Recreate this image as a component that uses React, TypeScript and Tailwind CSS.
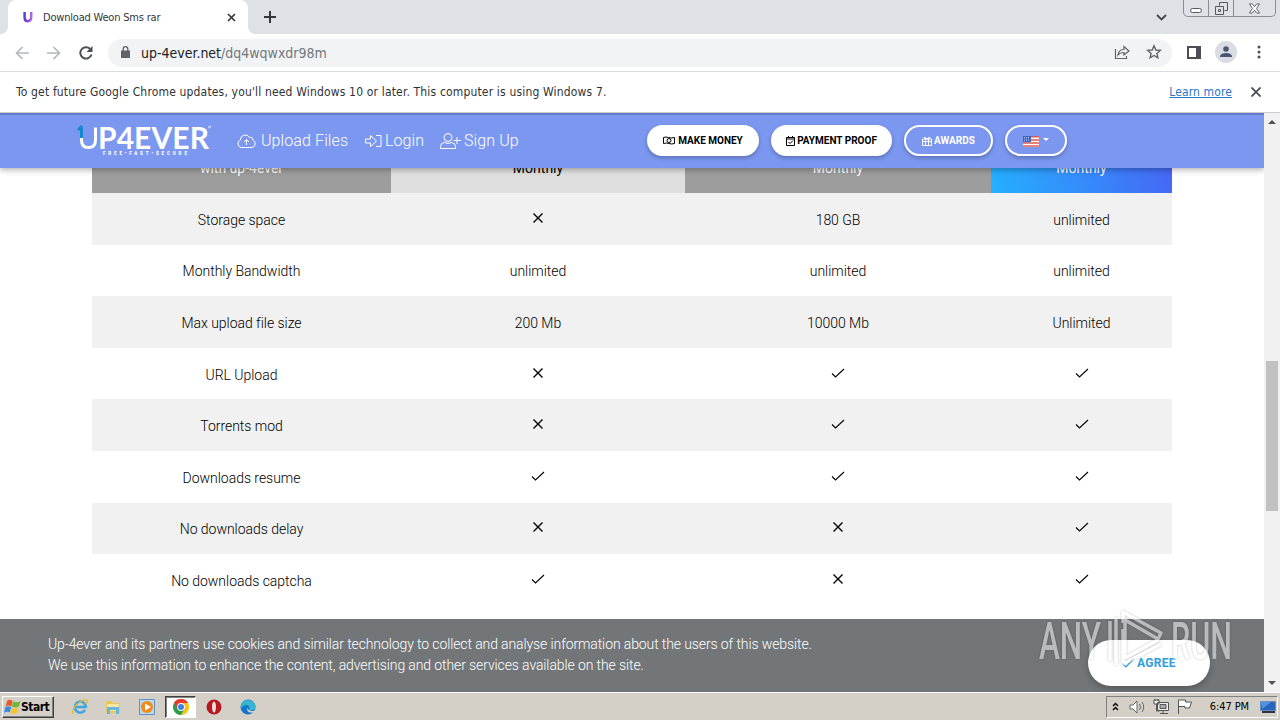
import { ReactNode } from 'react'

// Helper function for conditional classes
function classNames(...classes: (string | false)[]) {
  return classes.filter(Boolean).join(' ')
}

// true draws a check, false draws a cross
type Cell = string | boolean

const rows: { name: string; cells: Cell[] }[] = [
  { name: 'Storage space', cells: [false, '180 GB', 'unlimited'] },
  { name: 'Monthly Bandwidth', cells: ['unlimited', 'unlimited', 'unlimited'] },
  { name: 'Max upload file size', cells: ['200 Mb', '10000 Mb', 'Unlimited'] },
  { name: 'URL Upload', cells: [false, true, true] },
  { name: 'Torrents mod', cells: [false, true, true] },
  { name: 'Downloads resume', cells: [true, true, true] },
  { name: 'No downloads delay', cells: [false, false, true] },
  { name: 'No downloads captcha', cells: [true, false, true] },
]

const head = [
  { name: 'with up-4ever', style: 'bg-[#9d9d9d] text-white' },
  { name: 'Monthly', style: 'bg-[#dfdfdf] text-black' },
  { name: 'Monthly', style: 'bg-[#9d9d9d] text-white' },
  { name: 'Monthly', style: 'bg-linear-[80deg] from-[#24b0ff] to-[#4667f5] text-white' },
]

function Icon({ size = 'size-4', box = '0 0 16 16', width = 1, className = '', children }: {
  size?: string
  box?: string
  width?: number
  className?: string
  children: ReactNode
}) {
  return (
    <svg
      viewBox={box}
      fill="none"
      stroke="currentColor"
      strokeWidth={width}
      className={classNames('shrink-0', size, className)}
      aria-hidden="true"
    >
      {children}
    </svg>
  )
}

function Mark({ on }: { on: boolean }) {
  return (
    <Icon size="size-[14px]" box="0 0 14 14" width={on ? 1.1 : 1.4} className="-mt-[5px] text-black">
      {on ? <path d="M1 7.5 4.5 11 13 3" /> : <path d="m2.500 2.500 9 9M11.500 2.500l-9 9" />}
    </Icon>
  )
}

function TabStrip() {
  return (
    <div className="flex h-[34px] shrink-0 bg-[#dee1e6]">
      <div className="relative ml-2 flex w-60 items-center rounded-t-lg bg-white text-[#35363a]">
        {/* Curved feet of the active tab */}
        <span className="absolute bottom-0 -left-2 size-2 bg-[radial-gradient(circle_at_0_0,#dee1e6_8px,#fff_8px)]" />
        <span className="absolute -right-2 bottom-0 size-2 bg-[radial-gradient(circle_at_100%_0,#dee1e6_8px,#fff_8px)]" />
        <svg viewBox="0 0 10 12" className="ml-[15px] h-3 w-[10px]" fill="none">
          <defs>
            <linearGradient id="fav" x1="0" x2="1">
              <stop stopColor="#5a3fd0" />
              <stop offset="1" stopColor="#b565d8" />
            </linearGradient>
          </defs>
          <path d="M1.6 1v5.2q0 4 3.2 4t3.4-4V1" stroke="url(#fav)" strokeWidth="2.5" />
        </svg>
        <span className="mt-[2px] ml-[10px] w-[180px] text-[11px] tracking-[-0.2px] whitespace-nowrap">Download Weon Sms rar</span>
        <Icon size="size-[9px]" box="0 0 9 9" width={1.7} className="ml-[4px]"><path d="m1 1 7 7M8 1 1 8" /></Icon>
      </div>
      <Icon size="size-3" box="0 0 12 12" width={2} className="mt-[11px] ml-4 text-[#35363a]"><path d="M6 0v12M0 6h12" /></Icon>
      <Icon size="h-[7px] w-[11px]" box="0 0 11 7" width={1.8} className="mt-[14px] ml-auto text-[#45474b]"><path d="m1 1 4.500 4.500L10 1" /></Icon>
      {/* Window buttons */}
      <div className="mr-1 ml-4 flex h-[17px] w-[93px] rounded-b-[5px] border border-t-0 border-[#898d94] text-[#55585f]">
        <div className="flex w-[25px] justify-center border-r border-[#898d94]">
          <span className="mt-2 h-[5px] w-3 rounded-sm border border-[#55585f] bg-white" />
        </div>
        <div className="flex w-[25px] justify-center border-r border-[#898d94]">
          <Icon size="size-[13px]" box="0 0 13 13" className="mt-[2px]">
            <path d="M4.5 3.5v-3h8v8h-3M.5 4.5h8v8h-8zM3.5 7.5h2v2h-2z" />
          </Icon>
        </div>
        <div className="flex flex-1 justify-center">
          <Icon size="h-[11px] w-[13px]" box="0 0 13 12" className="mt-[3px]">
            <path d="M1 1h3l2.500 3L9 1h3L8.700 6 12 11H9L6.500 8 4 11H1l3.300-5z" fill="#fff" />
          </Icon>
        </div>
      </div>
    </div>
  )
}

function Toolbar() {
  return (
    <div className="flex h-[38px] shrink-0 items-center border-b border-[#dadce0] bg-white pl-[15px] text-[#5f6368]">
      <Icon size="size-[14px]" box="0 0 14 14" width={1.7} className="text-[#b5b7ba]"><path d="M14 7H1.500M7.500 1l-6 6 6 6" /></Icon>
      <Icon size="size-[14px]" box="0 0 14 14" width={1.7} className="ml-[18px] text-[#b5b7ba]"><path d="M0 7h12.500M6.500 1l6 6-6 6" /></Icon>
      <Icon size="size-[14px]" box="0 0 14 14" width={2} className="ml-[18px] text-[#4d5054]">
        <path d="M11.200 3A5.700 5.700 0 1 0 12.500 8.500" />
        <path d="M13.500 0v6h-6z" fill="currentColor" stroke="none" />
      </Icon>
      <div className="ml-[15px] flex h-7 w-[1064px] items-center rounded-full bg-[#f1f3f4] pl-[13px]">
        <svg viewBox="0 0 9 12" className="-mt-px h-3 w-[9px]" fill="#5f6368">
          <path d="M0 4.500h9V12H0z" />
          <path d="M2.200 5V3a2.300 2.300 0 0 1 4.600 0v2" fill="none" stroke="#5f6368" strokeWidth="1.300" />
        </svg>
        <span className="mt-px ml-[11px] text-[14px] text-[#202124]">
          up-4ever.net<span className="text-[#73777c]">/dq4wqwxdr98m</span>
        </span>
        <Icon size="size-4" className="-mt-[2px] mr-4 ml-auto" width={1.2}>
          <path d="M1.500 5v9.500h11V12M4 11c.5-4 3-5.500 6-5.500V2.500L15 7l-5 4V8.500C7.500 8.500 5.500 9 4 11z" />
        </Icon>
        <Icon size="size-4" className="-mt-px mr-[10px]" width={1.4}>
          <path d="m8 1.800 1.800 4.200 4.500.4-3.400 3 1 4.400L8 11.500l-3.900 2.300 1-4.400-3.400-3L6.200 6z" />
        </Icon>
      </div>
      <svg viewBox="0 0 14 13" className="-mt-px ml-[15px] h-[13px] w-[14px]"><path d="M1 1h12v11H1z" fill="none" stroke="#4b4e52" strokeWidth="2" /><path d="M9 1h4v11H9z" fill="#4b4e52" /></svg>
      <div className="-mt-px ml-[14px] flex size-[22px] items-center justify-center rounded-full bg-[#d9dde3]">
        <svg viewBox="0 0 12 12" className="size-3" fill="#4a5672"><circle cx="6" cy="3" r="2.800" /><path d="M0 11V10q1-3 6-3t6 3v1z" /></svg>
      </div>
      <svg viewBox="0 0 4 14" className="-mt-px ml-5 h-[14px] w-1" fill="#4b4e52"><circle cx="2" cy="2" r="1.500" /><circle cx="2" cy="7" r="1.500" /><circle cx="2" cy="12" r="1.500" /></svg>
    </div>
  )
}

function Logo() {
  return (
    <svg viewBox="0 0 134 32" className="-mt-px h-8 w-[134px] shrink-0" fill="#fff">
      <path d="M4.500 11v5q0 7.500 7 7.500T18.500 16V3.500" fill="none" stroke="#fff" strokeWidth="3" />
      <path d="M4.500 2.500V14M1 6l4-4" fill="none" stroke="#1688d0" strokeWidth="3" />
      <text x="21" y="25" textLength="111" lengthAdjust="spacingAndGlyphs" fontFamily="Lato" fontSize="31" fontWeight="700">P4EVER</text>
      <text x="26" y="31.300" textLength="84" fontFamily="Roboto" fontSize="4.500" fontWeight="900">FREE•FAST•SECURE</text>
      <circle cx="132.500" cy="3" r="1" fill="none" stroke="#fff" strokeWidth=".6" />
    </svg>
  )
}

function Navbar() {
  return (
    <nav className="z-10 flex h-[55px] shrink-0 items-center border-t-2 border-[#667bc5] bg-[#7b97f0] pb-[2px] pl-[77px] text-[16px] font-light tracking-[0.1px] whitespace-nowrap text-white shadow-[0_2px_6px_rgba(0,0,0,0.3)]">
      <Logo />
      <div className="ml-[25px] flex w-[129px] items-center">
        <svg viewBox="0 0 20 14" className="mr-1 h-[14px] w-[21px]" fill="none" stroke="currentColor">
          <path d="M4.500 13.500h11a4 4 0 0 0 1-7.500A3 3 0 0 0 13 3.300 5 5 0 0 0 3.800 6 4 4 0 0 0 4.500 13.500zM10 11V5.500M7.500 8 10 5.500 12.500 8" />
        </svg>
        Upload Files
      </div>
      <div className="flex w-[75px] items-center">
        <svg viewBox="0 0 17 14" className="mr-[3px] h-[14px] w-[17px]" fill="none" stroke="currentColor">
          <path d="M.5 5h5V1.500l6 5.500-6 5.500V9h-5zM11 1.500h5v11h-5" />
        </svg>
        Login
      </div>
      <div className="flex w-[207px] items-center">
        <svg viewBox="0 0 21 16" className="mr-[3px] h-4 w-[21px]" fill="none" stroke="currentColor">
          <circle cx="8" cy="4.500" r="4" />
          <path d="M4.500 9.500q-4 .5-4 4v2h15v-2q0-3.500-4-4-3.500 2-7 0zM17 4v7M13.500 7.500H21" />
        </svg>
        Sign Up
      </div>
      <div className="flex gap-3 text-[10px] font-bold tracking-[0]">
        <a className="flex h-[31px] w-28 items-center justify-center rounded-full bg-white text-black shadow-[0_2px_4px_rgba(0,0,0,0.25)]">
          <svg viewBox="0 0 12 9" className="mr-[3px] h-[9px] w-3" fill="none" stroke="currentColor"><path d="M.5 1.500q2.500-1 5 0t6 0v6q-3 1-5.500 0t-5.500 0z" /><circle cx="6" cy="4.500" r="2" /></svg>
          MAKE MONEY
        </a>
        <a className="flex h-[31px] w-[121px] items-center justify-center rounded-full bg-white text-black shadow-[0_2px_4px_rgba(0,0,0,0.25)]">
          <svg viewBox="0 0 9 10" className="mr-[2px] h-[10px] w-[9px]" fill="none" stroke="currentColor"><path d="M.5 1.500h8v8h-8zM.5 3h8M2.500 0v2M6.500 0v2M2.500 6 4 7.500l3-3" /></svg>
          PAYMENT PROOF
        </a>
        <a className="flex h-[31px] w-[89px] items-center justify-center rounded-full border-2 border-white shadow-[0_2px_4px_rgba(0,0,0,0.25)]">
          <svg viewBox="0 0 10 10" className="mr-[2px] size-[10px]" fill="none" stroke="currentColor"><path d="M.5 3h9v6.500h-9zM0 5.500h10M3.500 3v6.500M6.500 3v6.500M5 3Q2 2.500 2 1.500T5 3q3-.5 3-1.500T5 3z" /></svg>
          AWARDS
        </a>
        <a className="flex h-[31px] w-[62px] items-center justify-center rounded-full border-2 border-white shadow-[0_2px_4px_rgba(0,0,0,0.25)]">
          <svg viewBox="0 0 16 11" className="mt-px h-[11px] w-4">
            <path d="M0 0h16v11H0z" fill="#fff" />
            <path d="M0 .8h16M0 3.900h16M0 7h16M0 10.100h16" stroke="#dd5a50" strokeWidth="1.500" />
            <path d="M0 0h8v6.200H0z" fill="#3f66c4" />
            <path d="M1 1.500h6M1 3h6M1 4.500h6" stroke="#c6d3f3" strokeWidth=".7" strokeDasharray="1 1" />
          </svg>
          <svg viewBox="0 0 6 3" className="-mt-[3px] ml-1 h-[3px] w-[6px]" fill="#fff"><path d="M0 0h6L3 3z" /></svg>
        </a>
      </div>
    </nav>
  )
}

function PlanTable() {
  return (
    <div className="ml-[92px] w-[1080px] text-[14px] text-black">
      <div className="grid h-[25px] grid-cols-[299px_294px_306px_181px] overflow-hidden text-center">
        {head.map((item, i) => (
          <div key={i} className={item.style}>
            <div className="-mt-[10px] leading-5">{item.name}</div>
          </div>
        ))}
      </div>
      {rows.map((row, i) => (
        <div
          key={row.name}
          className={classNames(
            'grid h-[51.6px] grid-cols-[299px_294px_306px_181px] place-items-center pt-[3px] font-[350] tracking-[-0.03px]',
            i % 2 === 0 && 'bg-[#f1f1f1]',
          )}
        >
          <div>{row.name}</div>
          {row.cells.map((cell, j) => (
            <div key={j}>{typeof cell === 'string' ? cell : <Mark on={cell} />}</div>
          ))}
        </div>
      ))}
    </div>
  )
}

function CookieBar() {
  return (
    <div className="mt-auto flex h-[73px] shrink-0 bg-[#727679] pt-[15px] pl-12 text-[14px] leading-[21px] font-light tracking-[-0.108px] text-white">
      <p className="w-[1040px]">
        Up-4ever and its partners use cookies and similar technology to collect and analyse information about the users of this website.
        <br />
        We use this information to enhance the content, advertising and other services available on the site.
      </p>
      <button className="mt-[6px] flex h-[46px] w-[122px] items-center justify-center rounded-full bg-white text-[12px] font-bold tracking-[0.3px] text-[#2f9fe0] shadow-[0_3px_6px_rgba(0,0,0,0.25)]">
        <Icon size="size-3" box="0 0 12 12" width={1.2} className="mr-[3px]"><path d="m.5 6.500 3.500 3.500 7.500-8" /></Icon>
        AGREE
      </button>
    </div>
  )
}

function Scrollbar() {
  return (
    <div className="flex w-4 shrink-0 flex-col items-center bg-[#f1f1f1] py-[7px]">
      <svg viewBox="0 0 8 4" className="h-1 w-2" fill="#505050"><path d="M0 4h8L4 0z" /></svg>
      <div className="mt-[237px] h-[150px] w-3 bg-[#c1c1c1]" />
      <svg viewBox="0 0 8 4" className="mt-auto h-1 w-2" fill="#505050"><path d="M0 0h8L4 4z" /></svg>
    </div>
  )
}

function Watermark() {
  return (
    <svg viewBox="0 0 196 64" className="absolute right-[47px] bottom-[47px] h-16 w-[196px] opacity-50 drop-shadow-[0_0_1px_rgba(0,0,0,0.5)]" fill="#fff">
      <text x="2" y="50" textLength="62" lengthAdjust="spacingAndGlyphs" fontFamily="Roboto" fontSize="51" fontWeight="500">ANY</text>
      <text x="134" y="50" textLength="61" lengthAdjust="spacingAndGlyphs" fontFamily="Roboto" fontSize="51" fontWeight="500">RUN</text>
      <path d="M73 12v40M79 8v48M86 20v35l38-20M86 14V3l38 21-3 6-33-19v38l33-18" fill="none" stroke="#fff" strokeWidth="3.500" strokeLinejoin="round" />
    </svg>
  )
}

function Taskbar() {
  return (
    <div className="flex h-7 shrink-0 items-center border-t border-white bg-[#d4d0c8] pl-[2px] text-black">
      <div className="flex h-[22px] w-[52px] items-center border border-t-white border-r-[#404040] border-b-[#404040] border-l-white pl-px shadow-[inset_-1px_-1px_#808080]">
        <svg viewBox="0 0 16 14" className="h-[15px] w-[17px]">
          <path d="M3 1.500q2-1.500 5 0L7 7Q4 5 1.500 7z" fill="#ee5a24" />
          <path d="M8.500 2q3 2 7 0l-1.500 5q-3 2-6.500 0z" fill="#70b83b" />
          <path d="M1.200 7.700q3-2 5.600-.2L5.500 12.500q-3-1.500-5.500.5z" fill="#3b8be0" />
          <path d="M7.300 7.900q3 2 6.500 0l-1.500 5q-3 2-6.300 0z" fill="#f8c32c" />
        </svg>
        <span className="text-[12px] font-bold tracking-[-0.5px]">Start</span>
      </div>
      {/* Quick launch */}
      <svg viewBox="0 0 18 18" className="ml-[17px] size-[18px]" fill="none">
        <path d="M14 12a5.500 5.500 0 1 1 .8-3H4" stroke="#3aa7e4" strokeWidth="2.500" />
        <path d="M2 16Q0 12 6 6.500T16 2q1 1-1 4" stroke="#e9b83b" strokeWidth="1.300" />
      </svg>
      <svg viewBox="0 0 16 16" className="ml-4 size-4">
        <path d="M1 2h6l1 2h7v10H1z" fill="#e8c75a" />
        <path d="M2 5h12v7H2z" fill="#f6e6a0" />
        <path d="M2 15V8h12v7h-3v-4H5v4z" fill="#67b6df" />
      </svg>
      <svg viewBox="0 0 16 16" className="ml-[18px] size-4">
        <path d="M.5.500h15v15H.5z" fill="#b8d8ee" stroke="#5f92c6" />
        <circle cx="8" cy="8" r="6" fill="#f18a1b" />
        <path d="M6 4.500v7L12 8z" fill="#fff" />
      </svg>
      <div className="ml-[10px] flex h-[22px] w-[31px] items-center justify-center border border-t-[#404040] border-r-white border-b-white border-l-[#404040] bg-white shadow-[inset_1px_1px_#808080]">
        <svg viewBox="0 0 16 16" className="size-4">
          <path d="M8 8 1.070 4A8 8 0 0 1 14.930 4z" fill="#e33b2e" />
          <path d="M8 8V4h6.930A8 8 0 0 1 8 16l3.400-6z" fill="#fbc116" />
          <path d="M8 8 1.070 4A8 8 0 0 0 8 16l3.500-6z" fill="#2a9d4a" />
          <path d="M8 4.200V8L4.500 10 1.070 4A8 8 0 0 1 14.930 4z" fill="#e33b2e" />
          <circle cx="8" cy="8" r="3.900" fill="#fff" />
          <circle cx="8" cy="8" r="3" fill="#3f7ee8" />
        </svg>
      </div>
      <svg viewBox="0 0 16 16" className="ml-[10px] size-4"><circle cx="8" cy="8" r="7.500" fill="#b81820" /><ellipse cx="8" cy="8" rx="2" ry="5.500" fill="#eadede" /></svg>
      <svg viewBox="0 0 16 16" className="ml-[18px] size-4">
        <circle cx="8" cy="8" r="7.500" fill="#1477c9" />
        <path d="M1 6a7.500 7.500 0 0 1 14.500 2q0 3-4 3-3 0-2-2 0-3-3-3T1 9z" fill="#38b6d0" />
        <path d="M8 7q-2 4 4 5l3-.5-1 2q-6 1-7-3z" fill="#d4d0c8" />
      </svg>
      {/* System tray */}
      <div className="mr-[2px] ml-auto flex h-[22px] w-[172px] items-center border border-t-[#808080] border-r-white border-b-white border-l-[#808080] pl-[6px]">
        <Icon size="h-[9px] w-[7px]" box="0 0 7 9" width={1.4} className="-ml-px"><path d="m1 4 2.500-2.500L6 4M1 8l2.500-2.500L6 8" /></Icon>
        <svg viewBox="0 0 17 14" className="ml-[10px] h-[14px] w-[17px]" fill="#fff" stroke="#666"><path d="M1 5h3l4-4v12L4 9H1z" /><path d="M10.500 4q2 3 0 6M13 2q3.500 5 0 10" fill="none" /></svg>
        <svg viewBox="0 0 16 15" className="ml-[7px] h-[15px] w-4" fill="#eee" stroke="#555"><path d="M4.500 3.500h11v8h-11zM7 14.500h8M10 11.500v3M1 1h5v4H1zM3.500 5v7h3M2 0v2M5 0v2" /><path d="M7 5.500h6v4H7z" fill="#aaa" /></svg>
        <svg viewBox="0 0 16 15" className="ml-[8px] h-[15px] w-4" fill="#fff" stroke="#555"><path d="M1.500 15V1h7v2h6l-2 6H8V7.500H1.500" /></svg>
        <span className="mt-px ml-auto text-[11px] tracking-[-0.1px] whitespace-nowrap">6:47 PM</span>
        <svg viewBox="0 0 16 14" className="mr-[1px] ml-[11px] h-[14px] w-4"><path d="M.5 1.500h15v9H.5z" fill="#2764bc" stroke="#6a8fc0" /><path d="M1 2h10L2 9z" fill="#4e94e2" /><path d="M2 11h13v2H2z" fill="#2b3642" /></svg>
      </div>
    </div>
  )
}

export default function App() {
  return (
    <div className="relative flex h-[720px] w-[1280px] flex-col overflow-hidden bg-white font-['DejaVu_Sans_Condensed','DejaVu_Sans',sans-serif]">
      <TabStrip />
      <Toolbar />
      {/* Info bar */}
      <div className="flex h-[41px] shrink-0 items-center border-b border-[#c9cbd0] pr-[19px] pl-4 text-[12px] text-[#303236]">
        <span className="tracking-[0.165px]">To get future Google Chrome updates, you'll need Windows 10 or later. This computer is using Windows 7.</span>
        <a className="ml-auto tracking-[0.12px] text-[#2877c9] underline">Learn more</a>
        <Icon size="size-[10px]" box="0 0 10 10" width={1.8} className="ml-[19px] text-[#4b4e52]"><path d="m.5.500 9 9M9.500.5l-9 9" /></Icon>
      </div>
      <div className="flex h-[579px] shrink-0">
        <main className="flex flex-1 flex-col overflow-hidden font-[Roboto,sans-serif]">
          <Navbar />
          <PlanTable />
          <CookieBar />
        </main>
        <Scrollbar />
      </div>
      <Taskbar />
      <Watermark />
    </div>
  )
}
